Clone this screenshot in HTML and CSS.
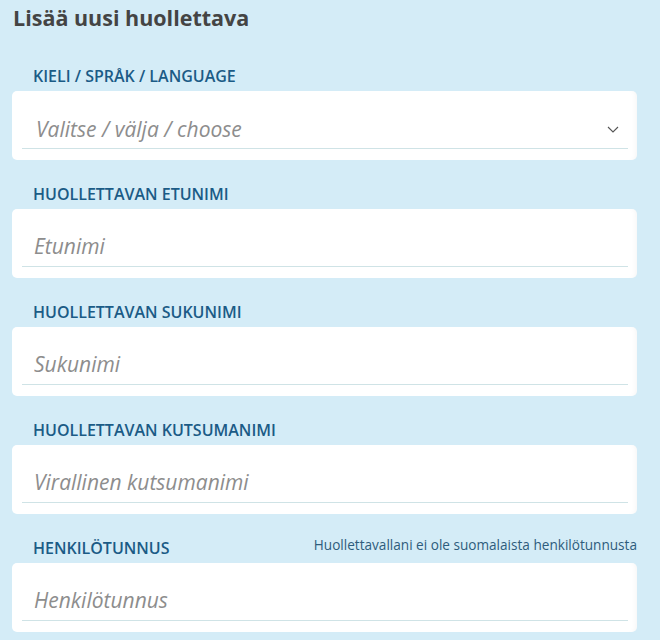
FILE: index.html
```html
<!DOCTYPE html>
<html lang="fi">

<head>
  <meta charset="UTF-8" />
  <meta name="viewport" content="width=device-width, initial-scale=1.0" />
  <title>Lisää uusi huollettava</title>
  <link rel="stylesheet" href="styles.css">
</head>

<body>
  <h1 class="page-title">Lisää uusi huollettava</h1>

  <form class="dependant-form">
    <div class="field">
      <div class="field-head">
        <label for="language">Kieli / Språk / Language</label>
      </div>
      <div class="field-box">
        <div class="select-wrap">
          <select id="language">
            <option value="">Valitse / välja / choose</option>
            <option value="fi">Suomi</option>
            <option value="sv">Svenska</option>
            <option value="en">English</option>
          </select>
          <svg class="chevron" width="12" height="7" viewBox="0 0 12 7">
            <path d="M1 1 L6 6 L11 1" fill="none" stroke="#555" stroke-width="1.1" />
          </svg>
        </div>
      </div>
    </div>

    <div class="field">
      <div class="field-head">
        <label for="firstName">Huollettavan etunimi</label>
      </div>
      <div class="field-box">
        <input type="text" id="firstName" placeholder="Etunimi" />
      </div>
    </div>

    <div class="field">
      <div class="field-head">
        <label for="lastName">Huollettavan sukunimi</label>
      </div>
      <div class="field-box">
        <input type="text" id="lastName" placeholder="Sukunimi" />
      </div>
    </div>

    <div class="field">
      <div class="field-head">
        <label for="nickName">Huollettavan kutsumanimi</label>
      </div>
      <div class="field-box">
        <input type="text" id="nickName" placeholder="Virallinen kutsumanimi" />
      </div>
    </div>

    <div class="field">
      <div class="field-head">
        <label for="ssn">Henkilötunnus</label>
        <a class="side-link" href="#">Huollettavallani ei ole suomalaista henkilötunnusta</a>
      </div>
      <div class="field-box">
        <input type="text" id="ssn" placeholder="Henkilötunnus" />
      </div>
    </div>
  </form>
</body>

</html>
```

FILE: styles.css
```css
:root {
  --page-bg: #d4ecf7;
  --label-blue: #1b5b86;
  --link-blue: #2e5c7c;
  --title-grey: #444444;
  --placeholder: #8d8d8d;
  --line: #cfe3e6;
}

body {
  margin: 0;
  padding: 4px 23px 0 12px;
  background-color: var(--page-bg);
  font-family: 'Open Sans', 'Noto Sans', sans-serif;
}

.page-title {
  margin: 0 0 32px 1px;
  font-size: 21.5px;
  line-height: 28px;
  font-weight: 700;
  color: var(--title-grey);
}

.dependant-form {
  display: flex;
  flex-direction: column;
  gap: 22px;
}

.field-head {
  display: flex;
  justify-content: space-between;
  align-items: flex-end;
  height: 22px;
  padding: 0 0 0 21px;
  margin-bottom: 5px;
}

.field-head label {
  font-size: 16px;
  line-height: 20px;
  font-weight: 600;
  text-transform: uppercase;
  color: var(--label-blue);
}

.side-link {
  font-size: 13.6px;
  line-height: 20px;
  color: var(--link-blue);
  text-decoration: none;
  margin-bottom: 3px;
}

.field-box {
  height: 69px;
  box-sizing: border-box;
  padding: 17px 9px 0 10px;
  background-color: #fff;
  border-radius: 5px;
  box-shadow: inset -6px 0 6px -6px rgba(0, 0, 0, 0.06);
}

/* 輸入框 */
.field-box input,
.field-box select {
  display: block;
  width: 100%;
  height: 41px;
  box-sizing: border-box;
  margin: 0;
  padding: 0 12px 0;
  border: none;
  border-bottom: 1px solid var(--line);
  background: transparent;
  font-family: inherit;
  font-size: 21px;
  font-style: italic;
  color: var(--placeholder);
  outline: none;
  border-radius: 0;
}

.field-box input::placeholder {
  color: var(--placeholder);
  opacity: 1;
}

.select-wrap {
  position: relative;
}

.field-box select {
  padding: 2px 14px 0;
  appearance: none;
  -webkit-appearance: none;
}

.chevron {
  position: absolute;
  right: 9px;
  top: 18px;
  pointer-events: none;
}
```
